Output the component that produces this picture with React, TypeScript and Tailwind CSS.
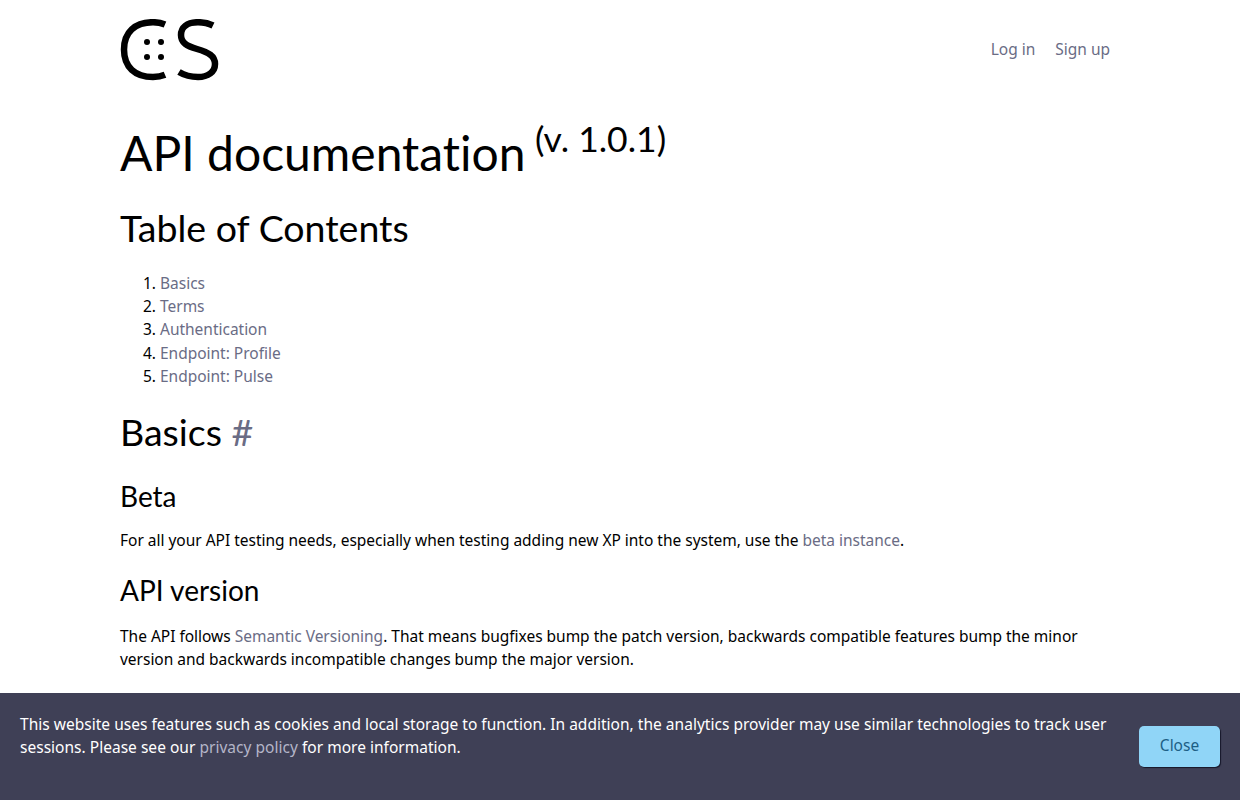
const toc = ['Basics', 'Terms', 'Authentication', 'Endpoint: Profile', 'Endpoint: Pulse']

function Logo() {
  return (
    <svg width="100" height="62" viewBox="0 0 100 62" fill="none" className="block">
      <path d="M45 5.5C41 3.8 37 3.2 33 3.2C15 3.2 4 13 4 30.5C4 48 15 58 33 58C37 58 41 57.5 45 55.8" stroke="#000" strokeWidth="6.5" />
      <circle cx="27" cy="23" r="3" fill="#000" />
      <circle cx="41" cy="23" r="3" fill="#000" />
      <circle cx="27" cy="38" r="3" fill="#000" />
      <circle cx="41" cy="38" r="3" fill="#000" />
      <path d="M93 6.5C88 4 83 3.2 78 3.2C67 3.2 61 8.5 61 16C61 24 67 27 77 30C89 33.5 95 37 95 45C95 53 88 58 78 58C71 58 64 56 59 53" stroke="#000" strokeWidth="6.5" />
    </svg>
  )
}

export default function App() {
  return (
    <div className="h-screen overflow-hidden bg-white text-black font-['Noto_Sans',sans-serif] text-[15.5px] tracking-[-0.015px] leading-[23.2px]">
      <div className="max-w-[1000px] mx-auto">
        <header className="flex items-center justify-between pt-[19px] pr-[10px]">
          <Logo />
          <nav className="flex gap-5 text-[#6a6c85]">
            <a>Log in</a>
            <a>Sign up</a>
          </nav>
        </header>

        <h1 className="mt-[43px] font-['Lato',sans-serif] [font-variant-ligatures:none] tracking-normal text-[48px] leading-[58px] h-[58px] whitespace-nowrap">
          API documentation <sup className="-ml-[3px] text-[35.5px] leading-none relative -top-[19px] align-baseline">(v. 1.0.1)</sup>
        </h1>

        <h2 className="mt-[22px] font-['Lato',sans-serif] tracking-normal text-[37.5px] leading-[48px]">Table of Contents</h2>

        <ol className="mt-[20px] list-decimal pl-10">
          {toc.map((item) => (
            <li key={item} className="text-black">
              <a className="text-[#6a6c85]">{item}</a>
            </li>
          ))}
        </ol>

        <h2 className="mt-[20px] font-['Lato',sans-serif] tracking-normal text-[37.5px] leading-[48px]">
          Basics <a className="text-[#6a6c85]">#</a>
        </h2>

        <h3 className="mt-[22px] font-['Lato',sans-serif] tracking-normal text-[28px] leading-[36px]">Beta</h3>
        <p className="mt-[15px]">
          For all your API testing needs, especially when testing adding new XP into the system, use the{' '}
          <a className="text-[#6a6c85]">beta instance</a>.
        </p>

        <h3 className="mt-[20px] font-['Lato',sans-serif] tracking-normal text-[28px] leading-[36px]">API version</h3>
        <p className="mt-[17px]">
          The API follows <a className="text-[#6a6c85]">Semantic Versioning</a>. That means bugfixes bump the patch version, backwards compatible features bump the minor version and backwards incompatible changes bump the major version.
        </p>
      </div>

      <div className="fixed bottom-0 left-0 right-0 h-[107px] bg-[#3f4056] text-white flex items-start justify-between pl-5 pr-5 pt-[20px]">
        <p className="w-[1100px] tracking-[0.02px]">
          This website uses features such as cookies and local storage to function. In addition, the analytics provider may use similar technologies to track user sessions. Please see our{' '}
          <a className="text-[#b4b5c8]">privacy policy</a> for more information.
        </p>
        <button className="mt-[13px] w-[81px] h-[41px] pb-[2px] rounded-[5px] bg-[#90d5f7] text-[#1d5f85] shadow-[1px_1px_1px_#16172a]">Close</button>
      </div>
    </div>
  )
}
